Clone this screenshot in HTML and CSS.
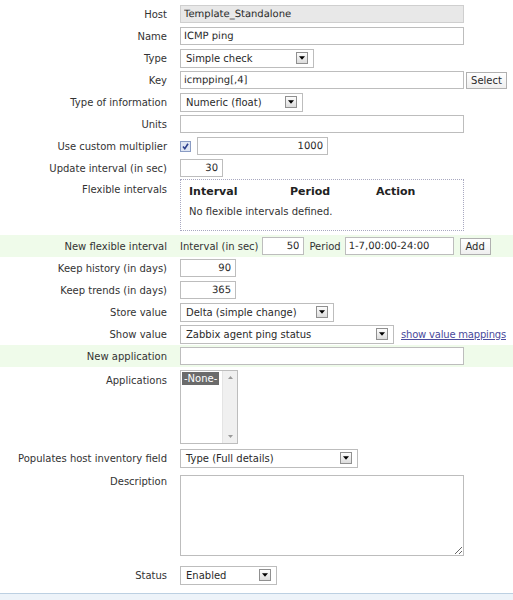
FILE: index.html
```html
<!DOCTYPE html>
<html lang="en">
<head>
    <meta charset="UTF-8">
    <title>Item configuration</title>
    <link rel="stylesheet" href="styles.css">
</head>
<body>
    <form class="item-form">
        <div class="row">
            <div class="lbl">Host</div>
            <div class="ctl"><input class="text wide readonly" value="Template_Standalone" readonly></div>
        </div>
        <div class="row">
            <div class="lbl">Name</div>
            <div class="ctl"><input class="text wide" value="ICMP ping"></div>
        </div>
        <div class="row">
            <div class="lbl">Type</div>
            <div class="ctl">
                <div class="combo w-type"><span>Simple check</span><span class="arrow"><svg width="7" height="4" viewBox="0 0 7 4"><path d="M0 0h7L3.5 4z"/></svg></span></div>
            </div>
        </div>
        <div class="row">
            <div class="lbl">Key</div>
            <div class="ctl"><input class="text wide" value="icmpping[,4]"><button type="button" class="btn btn-select">Select</button></div>
        </div>
        <div class="row">
            <div class="lbl">Type of information</div>
            <div class="ctl">
                <div class="combo w-info"><span>Numeric (float)</span><span class="arrow"><svg width="7" height="4" viewBox="0 0 7 4"><path d="M0 0h7L3.5 4z"/></svg></span></div>
            </div>
        </div>
        <div class="row">
            <div class="lbl">Units</div>
            <div class="ctl"><input class="text wide" value=""></div>
        </div>
        <div class="row">
            <div class="lbl">Use custom multiplier</div>
            <div class="ctl">
                <span class="check"><svg width="11" height="11" viewBox="0 0 11 11"><rect x="0.5" y="0.5" width="10" height="10" fill="#dfe6f3" stroke="#8a9cc4"/><path d="M3 5.5l1.8 2.2L8 2.8" fill="none" stroke="#2c3f8c" stroke-width="1.6"/></svg></span>
                <input class="text num w-mult" value="1000">
            </div>
        </div>
        <div class="row">
            <div class="lbl">Update interval (in sec)</div>
            <div class="ctl"><input class="text num w-delay" value="30"></div>
        </div>
        <div class="row row-top row-flex">
            <div class="lbl">Flexible intervals</div>
            <div class="ctl">
                <div class="flex-box">
                    <div class="flex-head"><span>Interval</span><span>Period</span><span>Action</span></div>
                    <div class="flex-empty">No flexible intervals defined.</div>
                </div>
            </div>
        </div>
        <div class="row row-new">
            <div class="lbl">New flexible interval</div>
            <div class="ctl">
                <span class="inline-lbl">Interval (in sec)</span>
                <input class="text num w-flexdelay" value="50">
                <span class="inline-lbl">Period</span>
                <input class="text w-period" value="1-7,00:00-24:00">
                <button type="button" class="btn btn-add">Add</button>
            </div>
        </div>
        <div class="row">
            <div class="lbl">Keep history (in days)</div>
            <div class="ctl"><input class="text num w-days" value="90"></div>
        </div>
        <div class="row">
            <div class="lbl">Keep trends (in days)</div>
            <div class="ctl"><input class="text num w-days" value="365"></div>
        </div>
        <div class="row">
            <div class="lbl">Store value</div>
            <div class="ctl">
                <div class="combo w-store"><span>Delta (simple change)</span><span class="arrow"><svg width="7" height="4" viewBox="0 0 7 4"><path d="M0 0h7L3.5 4z"/></svg></span></div>
            </div>
        </div>
        <div class="row">
            <div class="lbl">Show value</div>
            <div class="ctl">
                <div class="combo w-show"><span>Zabbix agent ping status</span><span class="arrow"><svg width="7" height="4" viewBox="0 0 7 4"><path d="M0 0h7L3.5 4z"/></svg></span></div>
                <a href="#" class="link">show value mappings</a>
            </div>
        </div>
        <div class="row row-new">
            <div class="lbl">New application</div>
            <div class="ctl"><input class="text wide" value=""></div>
        </div>
        <div class="row row-top row-apps">
            <div class="lbl">Applications</div>
            <div class="ctl">
                <div class="listbox">
                    <div class="options"><span class="opt selected">-None-</span></div>
                    <div class="scrollbar">
                        <svg width="5" height="3" viewBox="0 0 5 3"><path d="M0 3h5L2.5 0z"/></svg>
                        <svg width="5" height="3" viewBox="0 0 5 3"><path d="M0 0h5L2.5 3z"/></svg>
                    </div>
                </div>
            </div>
        </div>
        <div class="row">
            <div class="lbl">Populates host inventory field</div>
            <div class="ctl">
                <div class="combo w-inv"><span>Type (Full details)</span><span class="arrow"><svg width="7" height="4" viewBox="0 0 7 4"><path d="M0 0h7L3.5 4z"/></svg></span></div>
            </div>
        </div>
        <div class="row row-top row-desc">
            <div class="lbl">Description</div>
            <div class="ctl"><textarea class="desc"></textarea></div>
        </div>
        <div class="row">
            <div class="lbl">Status</div>
            <div class="ctl">
                <div class="combo w-status"><span>Enabled</span><span class="arrow"><svg width="7" height="4" viewBox="0 0 7 4"><path d="M0 0h7L3.5 4z"/></svg></span></div>
            </div>
        </div>
    </form>
    <div class="footer"></div>
</body>
</html>
```

FILE: styles.css
```css
body {
    margin: 0;
    padding-top: 3px;
    background: #fff;
    font-family: 'DejaVu Sans', sans-serif;
    font-size: 10px;
    color: #333;
}

.row {
    display: flex;
    align-items: center;
    height: 22px;
}
.row-top {
    align-items: flex-start;
    height: auto;
}
.row-new {
    background-color: #effbea; /* light green band for "new" rows */
}

.lbl {
    width: 167px;
    flex: none;
    text-align: right;
    padding-right: 13px;
    white-space: nowrap;
}
.ctl {
    display: flex;
    align-items: center;
}

/* text inputs */
.text {
    box-sizing: border-box;
    height: 18px;
    line-height: 16px;
    border: 1px solid #bdbdbd;
    padding: 0 3px;
    font-family: inherit;
    font-size: 10px;
    color: #2a2a2a;
    background: #fff;
    outline: none;
    text-rendering: geometricPrecision; /* keeps the thin underscore visible */
}
.text.readonly {
    background: #e8e8e8;
    border-color: #cfcfcf;
}
.text.num {
    text-align: right;
    padding-right: 4px;
}
.wide { width: 284px; }
.w-mult { width: 131px; }
.w-delay { width: 43px; }
.w-days { width: 56px; }
.w-flexdelay { width: 42px; }
.w-period { width: 109px; }

/* dropdowns */
.combo {
    box-sizing: border-box;
    height: 19px;
    border: 1px solid #bdbdbd;
    background: #fff;
    display: flex;
    align-items: center;
    justify-content: space-between;
    padding: 0 5px 0 5px;
    color: #2a2a2a;
}
.combo .arrow {
    box-sizing: border-box;
    width: 12px;
    height: 12px;
    border: 1px solid #909090;
    background: linear-gradient(#fdfdfd, #dcdcdc);
    display: flex;
    align-items: center;
    justify-content: center;
}
.combo .arrow svg {
    width: 6px;
    height: 4px;
}
.w-type { width: 134px; }
.w-info { width: 123px; }
.w-store { width: 154px; }
.w-show { width: 214px; }
.w-inv { width: 178px; }
.w-status { width: 97px; }

/* buttons */
.btn {
    box-sizing: border-box;
    height: 17px;
    border: 1px solid #b0b0b0;
    background: linear-gradient(#ffffff, #efefef);
    font-family: inherit;
    font-size: 10px;
    color: #2a2a2a;
    padding: 0;
}
.btn-select {
    width: 41px;
    margin-left: 2px;
}
.btn-add {
    width: 31px;
    margin-left: 6px;
}

.check {
    display: flex;
    margin-right: 6px;
}

.inline-lbl {
    margin: 0 4px 0 0;
}
.w-flexdelay + .inline-lbl {
    margin-left: 5px;
}

.link {
    margin-left: 7px;
    color: #4a4a9c;
    text-decoration: underline;
    letter-spacing: -0.2px;
}

/* flexible intervals table */
.row-flex {
    padding-bottom: 4px;
}
.row-flex .lbl {
    padding-top: 5px;
}
.flex-box {
    box-sizing: border-box;
    width: 284px;
    height: 52px;
    border: 1px dotted #a8a8c0;
    padding: 5px 8px 0;
}
.flex-head {
    display: flex;
    font-weight: bold;
    font-size: 11px;
    color: #222;
}
.flex-head span:nth-child(1) { width: 101px; }
.flex-head span:nth-child(2) { width: 86px; }
.flex-empty {
    margin-top: 8px;
}

/* applications list */
.row-apps {
    padding: 3px 0;
}
.row-apps .lbl {
    padding-top: 5px;
}
.listbox {
    box-sizing: border-box;
    width: 58px;
    height: 74px;
    border: 1px solid #bdbdbd;
    display: flex;
    background: #fff;
}
.options {
    flex: 1;
    padding: 1px;
}
.opt.selected {
    display: inline-block;
    background: #6b6b6b;
    color: #fff;
    padding: 1px 2px;
    line-height: 11px;
}
.scrollbar {
    width: 14px;
    background: #f0f0f0;
    border-left: 1px solid #e4e4e4;
    display: flex;
    flex-direction: column;
    justify-content: space-between;
    align-items: center;
    padding: 5px 0;
}
.scrollbar svg {
    fill: #9a9a9a;
}

/* description */
.row-desc {
    padding: 6px 0 8px;
}
.row-desc .lbl {
    padding-top: 1px;
}
.desc {
    box-sizing: border-box;
    width: 284px;
    height: 81px;
    border: 1px solid #bdbdbd;
    margin: 0;
    display: block;
    font-family: inherit;
}

.footer {
    margin-top: 7px;
    height: 8px;
    border-top: 1px solid #bcd0e2;
    background: #edf3f9;
}
```
